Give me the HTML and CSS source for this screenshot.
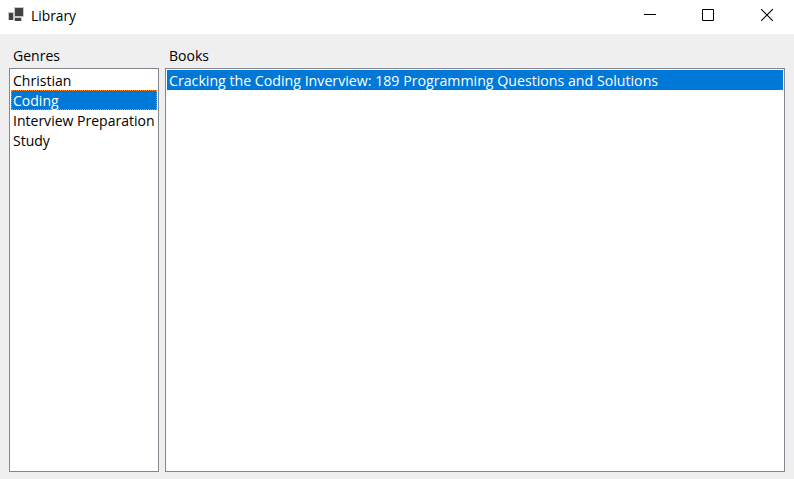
FILE: index.html
```html
<!DOCTYPE html>
<html lang="en">
<head>
<meta charset="utf-8">
<title>Library</title>
<link rel="stylesheet" href="styles.css">
</head>
<body>
<div class="window">
  <header class="titlebar">
    <svg class="app-icon" width="18" height="18" viewBox="0 0 18 18" shape-rendering="crispEdges">
      <path fill="#c9c9c9" d="M0 5h6V0h10v10h-2v4H6v-1H0z"/>
      <path fill="#424242" d="M1 6h4v7H1zM7 1h8v8H7zM7 11h6v3H7z"/>
    </svg>
    <h1 class="title"><span class="text caption">Library</span></h1>
    <div class="controls">
      <svg width="12" height="12" viewBox="0 0 12 12" shape-rendering="crispEdges"><path fill="#000" d="M0 5h12v1H0z"/></svg>
      <svg width="12" height="12" viewBox="0 0 12 12"><path fill="none" stroke="#000" d="M.5.5h11v11H.5z"/></svg>
      <svg class="close" width="12" height="12" viewBox="0 0 12 12"><path fill="none" stroke="#000" stroke-width="1.1" d="M0 0l12 12M12 0L0 12"/></svg>
    </div>
  </header>
  <main class="content">
    <section class="panel genres">
      <h2 class="label"><span class="text">Genres</span></h2>
      <ul class="list">
        <li class="item"><span class="text">Christian</span></li>
        <li class="item selected focused"><span class="text">Coding</span></li>
        <li class="item"><span class="text">Interview Preparation</span></li>
        <li class="item"><span class="text">Study</span></li>
      </ul>
    </section>
    <section class="panel books">
      <h2 class="label"><span class="text">Books</span></h2>
      <ul class="list">
        <li class="item selected"><span class="text wide">Cracking the Coding Inverview: 189 Programming Questions and Solutions</span></li>
      </ul>
    </section>
  </main>
</div>
</body>
</html>
```
FILE: styles.css
```css
* { box-sizing: border-box; }
body {
  margin: 0;
  font: 15px/20px "Open Sans", "Noto Sans", sans-serif;
  color: #000;
}
h1, h2, ul { margin: 0; padding: 0; font: inherit; list-style: none; }
svg { display: block; }
.window { display: flex; flex-direction: column; height: 479px; background: #efefef; overflow: hidden; }
.titlebar { display: flex; height: 34px; flex: none; background: #fff; padding-left: 8px; }
.app-icon { margin-top: 7px; }
.title { margin: 5px 0 0 5px; }
.text {
  display: inline-block;
  white-space: nowrap;
  transform: scaleX(0.935);
  transform-origin: 0 50%;
}
.caption { transform: scaleX(0.92); }
.wide { transform: scaleX(0.945); }
.controls { display: flex; gap: 46px; margin: 9px 21px 0 auto; }
.close { margin-left: 1px; }
.content { display: flex; flex: 1; gap: 6px; padding: 11px 9px 7px; }
.panel { display: flex; flex-direction: column; min-width: 0; }
.genres { width: 150px; flex: none; }
.books { flex: 1; }
.label { height: 23px; padding-left: 4px; }
.list { flex: 1; background: #fff; border: 1px solid #828790; padding: 1px; overflow: hidden; }
.item { height: 20px; padding-left: 2px; }
.selected { background: #0078d7; color: #fff; }
.focused { outline: 1px dotted #ff8728; outline-offset: -1px; }
```
